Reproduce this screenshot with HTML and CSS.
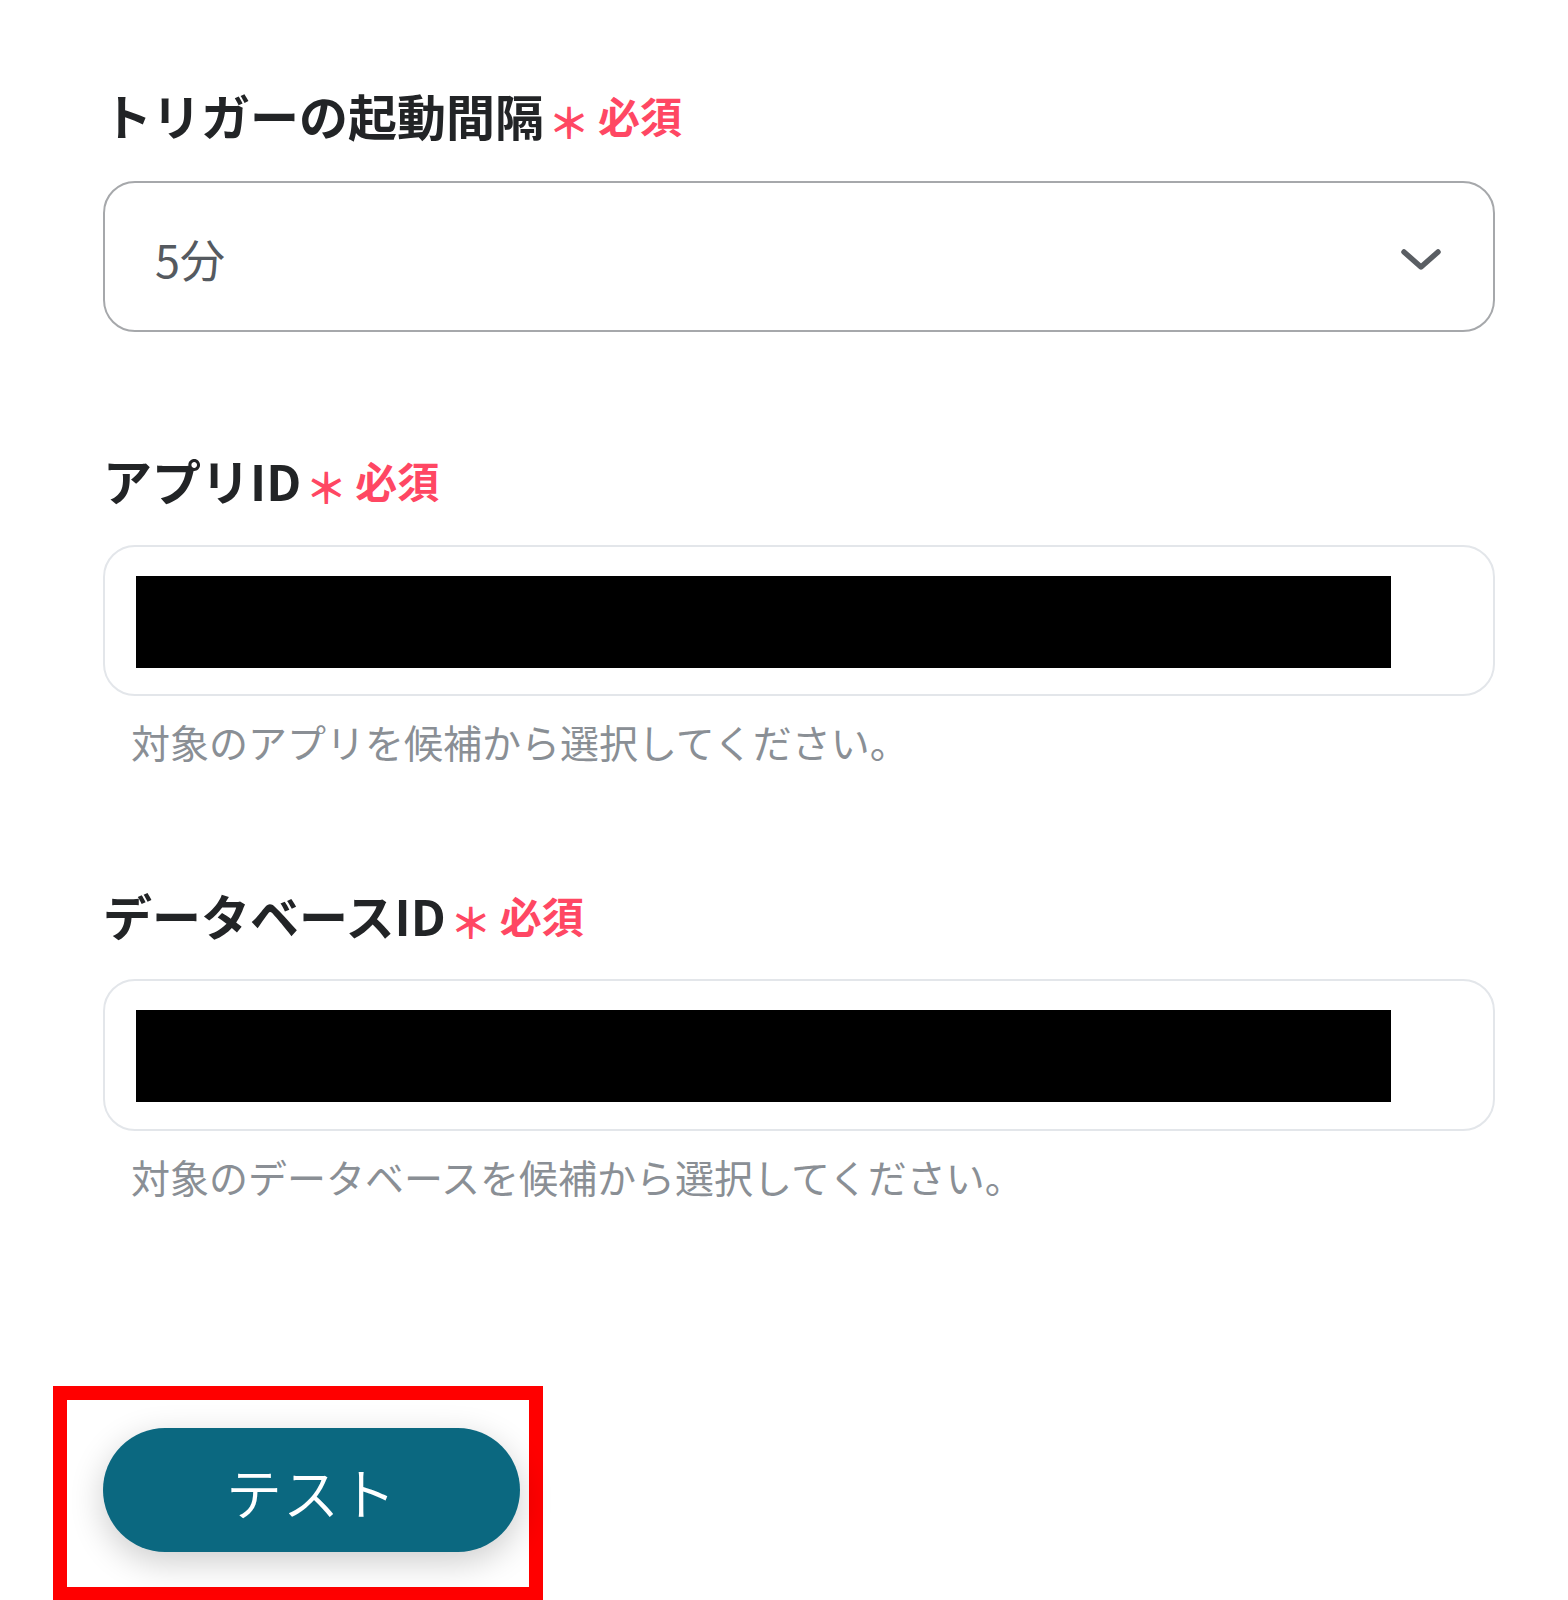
FILE: index.html
```html
<!DOCTYPE html>
<html lang="ja">
<head>
<meta charset="utf-8">
<link rel="stylesheet" href="styles.css">
</head>
<body>
<div class="page">
  <div class="label">トリガーの起動間隔<span class="req"><span class="ast">＊</span>必須</span></div>
  <div class="select">
    <span class="value">5分</span>
    <svg class="chev" width="44" height="28" viewBox="0 0 44 28"><path d="M5 6 L22 21 L39 6" fill="none" stroke="#5a5e63" stroke-width="5.5" stroke-linecap="round" stroke-linejoin="round"/></svg>
  </div>

  <div class="label l2">アプリID<span class="req"><span class="ast">＊</span>必須</span></div>
  <div class="input"><div class="mask"></div></div>
  <div class="help">対象のアプリを候補から選択してください。</div>

  <div class="label l3">データベースID<span class="req"><span class="ast">＊</span>必須</span></div>
  <div class="input"><div class="mask"></div></div>
  <div class="help">対象のデータベースを候補から選択してください。</div>

  <div class="highlight">
    <button class="btn">テスト</button>
  </div>
</div>
</body>
</html>
```

FILE: styles.css
```css
html, body {
  margin: 0;
  padding: 0;
  background: #ffffff;
}
body {
  font-family: "Noto Sans CJK JP", "Noto Sans", sans-serif;
  overflow: hidden;
  height: 1600px;
}
.page {
  padding: 85px 0 0 103px;
  width: 1392px;
}
.label {
  font-size: 49px;
  font-weight: 700;
  line-height: 60px;
  height: 60px;
  color: #222426;
  display: flex;
  align-items: center;
  white-space: nowrap;
}
.req {
  color: #ff4763;
  font-size: 42px;
  font-weight: 700;
  margin-left: 4px;
  display: inline-flex;
  align-items: center;
}
.ast {
  font-size: 42px;
  margin-right: 8px;
  transform: translateY(6px);
  display: inline-block;
}
.select {
  margin-top: 36px;
  height: 151px;
  box-sizing: border-box;
  border: 2.5px solid #a6a8ab;
  border-radius: 32px;
  display: flex;
  align-items: center;
  justify-content: space-between;
  padding: 0 50px 0 50px;
}
.value {
  font-size: 45px;
  color: #555a60;
  line-height: 1;
  margin-top: 4px;
}
.chev {
  margin-top: 6px;
}
.l2 {
  margin-top: 118px;
}
.l3 {
  margin-top: 121px;
}
.input {
  margin-top: 35px;
  height: 151px;
  box-sizing: border-box;
  border: 2.5px solid #e3e6ea;
  border-radius: 32px;
  padding: 29px 0 0 31px;
}
.mask {
  width: 1255px;
  height: 92px;
  background: #000;
}
.l3 + .input {
  margin-top: 34px;
  height: 152px;
}
.help {
  margin-top: 22px;
  padding-left: 28px;
  font-size: 39px;
  line-height: 46px;
  color: #8a8f95;
  white-space: nowrap;
}
.highlight {
  margin-top: 187px;
  margin-left: -50px;
  width: 490px;
  height: 215px;
  box-sizing: border-box;
  border: 14px solid #ff0000;
  padding: 28px 0 0 36px;
}
.btn {
  width: 417px;
  height: 124px;
  border: none;
  border-radius: 62px;
  background: #0b6880;
  color: #ffffff;
  font-family: "Noto Sans CJK JP", sans-serif;
  font-size: 56px;
  font-weight: 350;
  letter-spacing: 1px;
  box-shadow: 0 10px 34px rgba(0, 0, 0, 0.2);
  padding: 0;
}
```
